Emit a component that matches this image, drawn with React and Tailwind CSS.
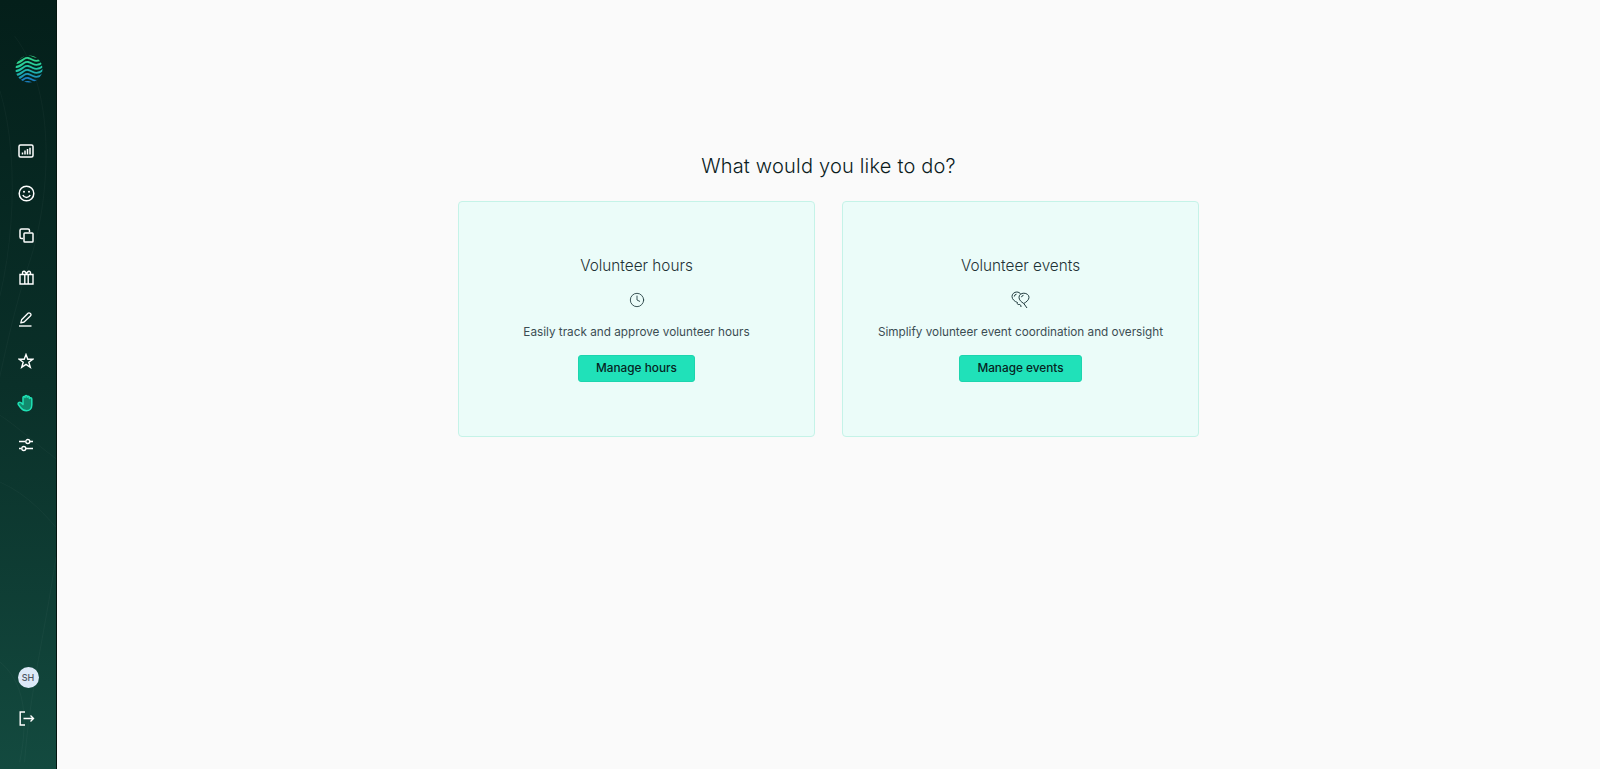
import { Clock } from "lucide-react";

const WAVES = [
  { y: 2, color: "#33d184" },
  { y: 6, color: "#2fd28e" },
  { y: 10, color: "#29d09a" },
  { y: 14, color: "#22c4a4" },
  { y: 18, color: "#1fb0ae" },
  { y: 22, color: "#1d96b8" },
  { y: 26, color: "#1b7fc0" },
  { y: 30, color: "#1b7fc0" },
];

function Logo() {
  return (
    <svg width="28" height="28" viewBox="0 0 28 28" fill="none">
      <defs>
        <clipPath id="logo-clip">
          <circle cx="14" cy="14" r="13.5" />
        </clipPath>
      </defs>
      <g clipPath="url(#logo-clip)" strokeWidth="1.9">
        {WAVES.map((w) => (
          <path
            key={w.y}
            d={`M-1 ${w.y + 2}C3 ${w.y + 3} 6 ${w.y} 9 ${w.y - 2}S14 ${w.y - 3} 18 ${w.y - 1}S25 ${w.y} 29 ${w.y - 4}`}
            stroke={w.color}
          />
        ))}
      </g>
    </svg>
  );
}

function ChartIcon() {
  return (
    <svg width="16" height="14" viewBox="0 0 16 14" fill="none">
      <rect x="1" y="1" width="14" height="12" rx="1.5" stroke="white" strokeWidth="1.5" />
      <path d="M4.5 10.5V8.5M7 10.5V6.5M9.5 10.5V5M12 10.5V3.8" stroke="white" strokeWidth="1.5" />
    </svg>
  );
}

function SmileIcon() {
  return (
    <svg width="17" height="17" viewBox="0 0 17 17" fill="none" stroke="white" strokeWidth="1.5">
      <circle cx="8.5" cy="8.5" r="7.3" />
      <circle cx="6" cy="6.8" r="1" fill="white" stroke="none" />
      <circle cx="11" cy="6.8" r="1" fill="white" stroke="none" />
      <path d="M4.8 10c.8 1.7 2.1 2.5 3.7 2.5s2.9-.8 3.7-2.5" />
    </svg>
  );
}

function CopyIcon() {
  return (
    <svg width="15" height="15" viewBox="0 0 15 15" fill="none" stroke="white" strokeWidth="1.5">
      <path d="M4 10.5H2.5A1.5 1.5 0 0 1 1 9V2.5A1.5 1.5 0 0 1 2.5 1H9a1.5 1.5 0 0 1 1.5 1.5V4" />
      <rect x="5" y="5" width="9" height="9" rx="0.8" />
    </svg>
  );
}

function GiftIcon() {
  return (
    <svg width="15" height="15" viewBox="0 0 15 15" fill="none" stroke="white" strokeWidth="1.4">
      <path d="M1 4.5H14V14H1Z" />
      <path d="M5.8 4.5V14M9.2 4.5V14" />
      <path d="M3.5 4.5V2.8A1.5 1.5 0 0 1 5 1.3c1 0 2 1.2 2.5 3.2M11.5 4.5V2.8A1.5 1.5 0 0 0 10 1.3c-1 0-2 1.2-2.5 3.2" />
    </svg>
  );
}

function PenIcon() {
  return (
    <svg width="16" height="16" viewBox="0 0 16 16" fill="none" stroke="white" strokeWidth="1.3">
      <path d="M2.8 11.8 3.6 8.8 10 2.2a1.4 1.4 0 0 1 2 0l.6.6a1.4 1.4 0 0 1 0 2L6.1 11z" strokeLinejoin="round" />
      <path d="M1 15H13.5" strokeWidth="1.4" />
    </svg>
  );
}

function StarIcon() {
  return (
    <svg width="16" height="16" viewBox="0 0 16 16" fill="none" stroke="white" strokeWidth="1.4">
      <path d="M8 1.5 9.8 6.2H14.8L10.8 9.3 12.3 14.3 8 11.4 3.7 14.3 5.2 9.3 1.2 6.2H6.2Z" strokeLinejoin="miter" />
    </svg>
  );
}

function HandIcon() {
  return (
    <svg width="18" height="18" viewBox="0 0 18 18" fill="#128a6d" stroke="#1fe0b4" strokeWidth="1.5" strokeLinejoin="round">
      <path d="M6 8.5V3.5C6 2 8 2 8 3.5V2.5C8 1 10.2 1 10.2 2.5V3.2C10.2 2 12.4 2 12.4 3.5V4.5C12.4 3.4 14.8 3.4 14.8 5V11C14.8 14.5 12.5 16.8 9.5 16.8 6.5 16.8 5 15.500 3.500 13.500L1.300 10.500C.6 9.200 2.300 7.500 3.800 8.500L6 10.500Z" />
    </svg>
  );
}

function SlidersIcon() {
  return (
    <svg width="16" height="14" viewBox="0 0 16 14" fill="none" stroke="white" strokeWidth="1.3">
      <path d="M1 3.5H7.5M12 3.5H15" />
      <circle cx="9.8" cy="3.5" r="2" />
      <path d="M1 10.5H3.5M8 10.5H15" />
      <circle cx="5.8" cy="10.5" r="2" />
    </svg>
  );
}

function LogoutIcon() {
  return (
    <svg width="16" height="15" viewBox="0 0 16 15" fill="none" stroke="white" strokeWidth="1.4">
      <path d="M6 1H1.2V14H6" />
      <path d="M4.5 7.5H14.5M11.5 4.5 14.5 7.5 11.5 10.5" />
    </svg>
  );
}

function BalloonsIcon() {
  return (
    <svg width="19" height="18" viewBox="0 0 19 18" fill="none" stroke="#1f3a3d" strokeWidth="1">
      <path d="M6.5 11.5C3.5 10.5 1 8.2 1 5.5 1 3 3.2 1 5.8 1 7.5 1 9 1.9 9.8 3.2" />
      <path d="M12.8 12.5C10.3 11 8 9 8 6.3 8 4 10 2.2 12.8 2.2S18 4 18 6.3C18 9 15.3 11 12.8 12.5Z" />
      <path d="M6.5 11.5C5.8 13 6.8 13.7 8 13.5S10 14 10 16" />
      <path d="M12.8 12.5 16 17" />
      <path d="M3.3 5.5A2.5 2.5 0 0 1 5.5 3.2M10.5 6.2A2.3 2.3 0 0 1 12.5 4.3" />
    </svg>
  );
}

const NAV = [
  { key: "chart", icon: <ChartIcon /> },
  { key: "smile", icon: <SmileIcon /> },
  { key: "copy", icon: <CopyIcon /> },
  { key: "gift", icon: <GiftIcon /> },
  { key: "pen", icon: <PenIcon /> },
  { key: "star", icon: <StarIcon /> },
  { key: "hand", icon: <HandIcon /> },
  { key: "sliders", icon: <SlidersIcon /> },
];

const CARDS = [
  {
    title: "Volunteer hours",
    icon: <Clock size={16} color="#1f3a3d" strokeWidth={1.3} />,
    text: "Easily track and approve volunteer hours",
    action: "Manage hours",
  },
  {
    title: "Volunteer events",
    icon: <BalloonsIcon />,
    text: "Simplify volunteer event coordination and oversight",
    action: "Manage events",
  },
];

function Sidebar() {
  return (
    <aside className="relative flex h-full w-[57px] shrink-0 flex-col overflow-hidden border-r border-[#03150f] bg-gradient-to-b from-[#041f1a] via-[#0a3029] to-[#134a3f]">
      <svg className="absolute inset-0 h-full w-full" viewBox="0 0 57 769" fill="none" stroke="#ffffff" strokeOpacity="0.035">
        <path d="M-10 60C20 120 20 240 -10 330" />
        <path d="M15 30C60 90 50 200 30 260S0 380 -10 420" />
        <path d="M57 460C30 440 10 420 -10 410" />
        <path d="M-10 480C20 490 40 510 57 530" />
        <path d="M-10 660C25 680 30 720 20 769" />
        <path d="M57 560C45 640 30 700 25 769" />
      </svg>
      <div className="relative flex h-full flex-col items-center">
        <div className="mt-[55px] ml-0.5 h-7">
          <Logo />
        </div>
        <nav className="mt-[56px] mr-1 flex flex-col items-center gap-[18px]">
          {NAV.map((item) => (
            <div key={item.key} className="flex h-6 w-6 items-center justify-center">
              {item.icon}
            </div>
          ))}
        </nav>
        <div className="mt-auto mb-[43px] flex flex-col items-center gap-[22px]">
          <div className="flex h-[21px] w-[21px] items-center justify-center rounded-full bg-[#dde9f8] text-[9px] font-medium text-[#4d5560]">
            SH
          </div>
          <div className="mr-0.5 flex h-4 w-4 items-center justify-center">
            <LogoutIcon />
          </div>
        </div>
      </div>
    </aside>
  );
}

function Card({ card }) {
  return (
    <div className="flex h-[236px] w-[357px] flex-col items-center rounded border border-[#c5f3e8] bg-[#ebfcf9] pt-[52px]">
      <h2 className="text-[15.3px] leading-6 font-[350] text-[#1e3235]">{card.title}</h2>
      <div className="mt-[12px] flex h-5 items-center justify-center">{card.icon}</div>
      <p className="mt-[12px] text-[11.75px] leading-5 text-[#3c4d53]">{card.text}</p>
      <button className="mt-[13px] h-[27px] rounded-[3px] border border-[#1cd5ae] bg-[#20e1b9] px-[17px] text-[11.8px] font-medium text-[#06241f]">
        {card.action}
      </button>
    </div>
  );
}

export default function App() {
  return (
    <div className="flex h-[769px] w-full overflow-hidden bg-[#fafafa] font-['Inter',sans-serif]">
      <Sidebar />
      <main className="flex flex-1 flex-col items-center pt-[152px]">
        <h1 className="text-[20px] leading-7 font-[350] tracking-[0.2px] text-[#0b1c1d]">What would you like to do?</h1>
        <div className="mt-[21px] flex gap-[27px]">
          {CARDS.map((card) => (
            <Card key={card.title} card={card} />
          ))}
        </div>
      </main>
    </div>
  );
}
